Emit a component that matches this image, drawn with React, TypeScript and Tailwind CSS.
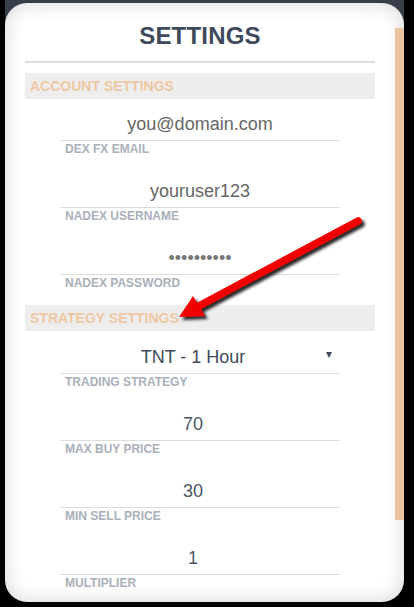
const fieldsA = [
  { value: "you@domain.com", label: "DEX FX EMAIL", tone: "text-[#666666]" },
  { value: "youruser123", label: "NADEX USERNAME", tone: "text-[#666666]" },
  { value: "••••••••••", label: "NADEX PASSWORD", tone: "text-[#777777]" },
];

const fieldsB = [
  { value: "70", label: "MAX BUY PRICE" },
  { value: "30", label: "MIN SELL PRICE" },
  { value: "1", label: "MULTIPLIER" },
];

const SectionHeader = ({ title }: { title: string }) => (
  <div className="h-[26px] bg-[#eeeeee] pl-[5px] text-[14px] font-bold leading-[26px] text-[#efc8a1]">
    {title}
  </div>
);

const Label = ({ text }: { text: string }) => (
  <div className="h-[15px] pl-[5px] pt-[1px] text-[12px] font-bold leading-[14px] text-[#a9b0ba]">
    {text}
  </div>
);

const App = () => {
  return (
    <div className="relative h-[607px] w-[414px] overflow-hidden bg-black font-['Liberation_Sans',Arial,sans-serif]">
      <div className="ml-[5px] h-[602px] w-[399px] bg-[linear-gradient(#373e49_50%,#000_50%)] pt-[3px]">
        <div className="flex h-[599px] overflow-hidden rounded-[22px] bg-white shadow-[inset_0_0_20px_rgba(0,0,0,0.16)]">
          <div className="flex-1 px-5">
            <h1 className="pt-[19px] text-center text-[24px] font-bold leading-[28px] tracking-[0.2px] text-[#3e4a5b]">
              SETTINGS
            </h1>
            <div className="mt-[11px] border-t-2 border-[#dddddd]" />
            <div className="mt-[10px]">
              <SectionHeader title="ACCOUNT SETTINGS" />
              <div className="px-[35px] pt-[7px]">
                {fieldsA.map((f, i) => (
                  <div key={f.label} className={i > 0 ? "mt-[17px]" : ""}>
                    <div
                      className={`h-[35px] border-b border-[#dddddd] pt-[1px] text-center text-[18px] leading-[34px] ${f.tone}`}
                    >
                      {f.value}
                    </div>
                    <Label text={f.label} />
                  </div>
                ))}
              </div>
            </div>
            <div className="mt-[15px]">
              <SectionHeader title="STRATEGY SETTINGS" />
              <div className="px-[35px] pt-[8px]">
                <div className="relative h-[35px] border-b border-[#dddddd] pr-[14px] pt-[1px] text-center text-[18px] leading-[34px] text-[#3e4a5b]">
                  TNT - 1 Hour
                  <span className="absolute right-[8px] top-[13px] h-0 w-0 border-l-[3px] border-r-[3px] border-t-[6px] border-l-transparent border-r-transparent border-t-[#3e4a5b]" />
                </div>
                <Label text="TRADING STRATEGY" />
                {fieldsB.map((f) => (
                  <div key={f.label} className="mt-[17px]">
                    <div className="h-[35px] border-b border-[#dddddd] pr-[14px] pt-[1px] text-center text-[18px] leading-[34px] text-[#4a5566]">
                      {f.value}
                    </div>
                    <Label text={f.label} />
                  </div>
                ))}
              </div>
            </div>
          </div>
          <div className="w-[9px]">
            <div className="mt-[25px] h-[492px] bg-[#ebc59f]" />
          </div>
        </div>
      </div>

      {/* red pointer arrow drawn over the form */}
      <svg
        className="pointer-events-none absolute left-0 top-0"
        width="414"
        height="607"
        viewBox="0 0 414 607"
      >
        <defs>
          <filter id="arrowShadow" x="-20%" y="-20%" width="140%" height="140%">
            <feDropShadow dx="3" dy="3" stdDeviation="1.8" floodColor="#000" floodOpacity="0.85" />
          </filter>
        </defs>
        <g filter="url(#arrowShadow)">
          <line x1="358" y1="221" x2="197" y2="307" stroke="#f20000" strokeWidth="7.5" strokeLinecap="round" />
          <polygon points="179,317 193,296 205,316" fill="#f20000" />
        </g>
      </svg>
    </div>
  );
};

export default App;
